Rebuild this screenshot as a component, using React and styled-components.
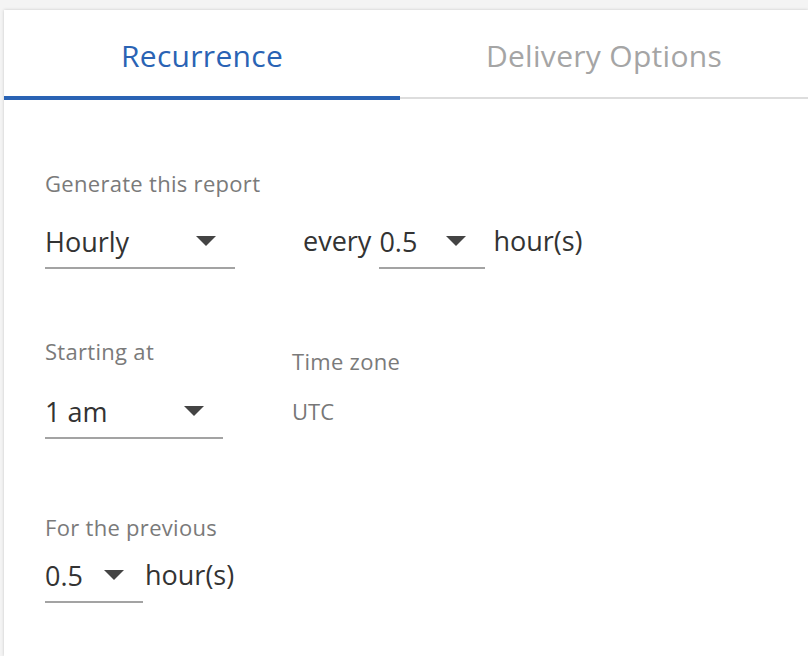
import React, { useState } from "react";
import styled, { createGlobalStyle } from "styled-components";

const GlobalStyle = createGlobalStyle`
  html, body {
    margin: 0;
    padding: 0;
    background: #f4f4f4;
    font-family: "Open Sans", "Noto Sans", sans-serif;
    overflow: hidden;
  }
`;

const Page = styled.div`
  padding: 10px 0 0 4px;
  height: 646px;
`;

const Card = styled.div`
  background: #ffffff;
  height: 100%;
  box-shadow: 0 0 3px rgba(0, 0, 0, 0.18);
`;

const TabBar = styled.div`
  display: flex;
  border-bottom: 2px solid #dddddd;
  height: 87px;
`;

const Tab = styled.div`
  width: 396px;
  flex: ${(p) => (p.$grow ? 1 : "none")};
  display: flex;
  align-items: center;
  justify-content: center;
  box-sizing: border-box;
  padding-top: 4px;
  font-size: 30px;
  letter-spacing: 0.3px;
  color: ${(p) => (p.$active ? "#2a63b4" : "#a5a5a5")};
  border-bottom: 4px solid ${(p) => (p.$active ? "#2a63b4" : "transparent")};
  margin-bottom: -3px;
  cursor: pointer;
`;

const Body = styled.div`
  padding: 70px 0 0 41px;
`;

const Section = styled.div`
  margin-bottom: ${(p) => p.$gap || 0}px;
`;

const Label = styled.div`
  font-size: 22px;
  letter-spacing: 0.3px;
  color: #7a7a7a;
  line-height: 28px;
  margin-bottom: ${(p) => p.$mb || 0}px;
`;

const Row = styled.div`
  display: flex;
  align-items: flex-start;
`;

const Select = styled.div`
  width: ${(p) => p.$w}px;
  height: 46px;
  box-sizing: border-box;
  display: flex;
  align-items: center;
  justify-content: space-between;
  padding-bottom: 8px;
  padding-right: ${(p) => p.$pr || 19}px;
  border-bottom: 2px solid #a3a3a3;
  font-size: 27px;
  color: #333333;
  cursor: pointer;
`;

const Arrow = styled.span`
  width: 0;
  height: 0;
  border-left: 10px solid transparent;
  border-right: 10px solid transparent;
  border-top: 10px solid #444444;
`;

const Text = styled.span`
  font-size: 27px;
  color: #333333;
  line-height: 36px;
  margin: ${(p) => p.$m || "0"};
`;

const Column = styled.div`
  margin-left: ${(p) => p.$ml || 0}px;
  padding-top: ${(p) => p.$pt || 0}px;
`;

const Static = styled.div`
  font-size: 22px;
  color: #777777;
  line-height: 36px;
`;

export default function App() {
  const [tab, setTab] = useState(0);
  return (
    <>
      <GlobalStyle />
      <Page>
        <Card>
          <TabBar>
            <Tab $active={tab === 0} onClick={() => setTab(0)}>
              Recurrence
            </Tab>
            <Tab $active={tab === 1} $grow onClick={() => setTab(1)}>
              Delivery Options
            </Tab>
          </TabBar>
          <Body>
            <Section $gap={68}>
              <Label $mb={26}>Generate this report</Label>
              <Row>
                <Select $w={190}>
                  Hourly
                  <Arrow />
                </Select>
                <Text $m="0 8px 0 68px">every</Text>
                <Select $w={106}>
                  0.5
                  <Arrow />
                </Select>
                <Text $m="0 0 0 8px">hour(s)</Text>
              </Row>
            </Section>
            <Section $gap={74}>
              <Row>
                <Column>
                  <Label $mb={28}>Starting at</Label>
                  <Select $w={178}>
                    1 am
                    <Arrow />
                  </Select>
                </Column>
                <Column $ml={69} $pt={10}>
                  <Label $mb={18}>Time zone</Label>
                  <Static>UTC</Static>
                </Column>
              </Row>
            </Section>
            <Section>
              <Label $mb={16}>For the previous</Label>
              <Row>
                <Select $w={98}>
                  0.5
                  <Arrow />
                </Select>
                <Text $m="0 0 0 2px">hour(s)</Text>
              </Row>
            </Section>
          </Body>
        </Card>
      </Page>
    </>
  );
}
